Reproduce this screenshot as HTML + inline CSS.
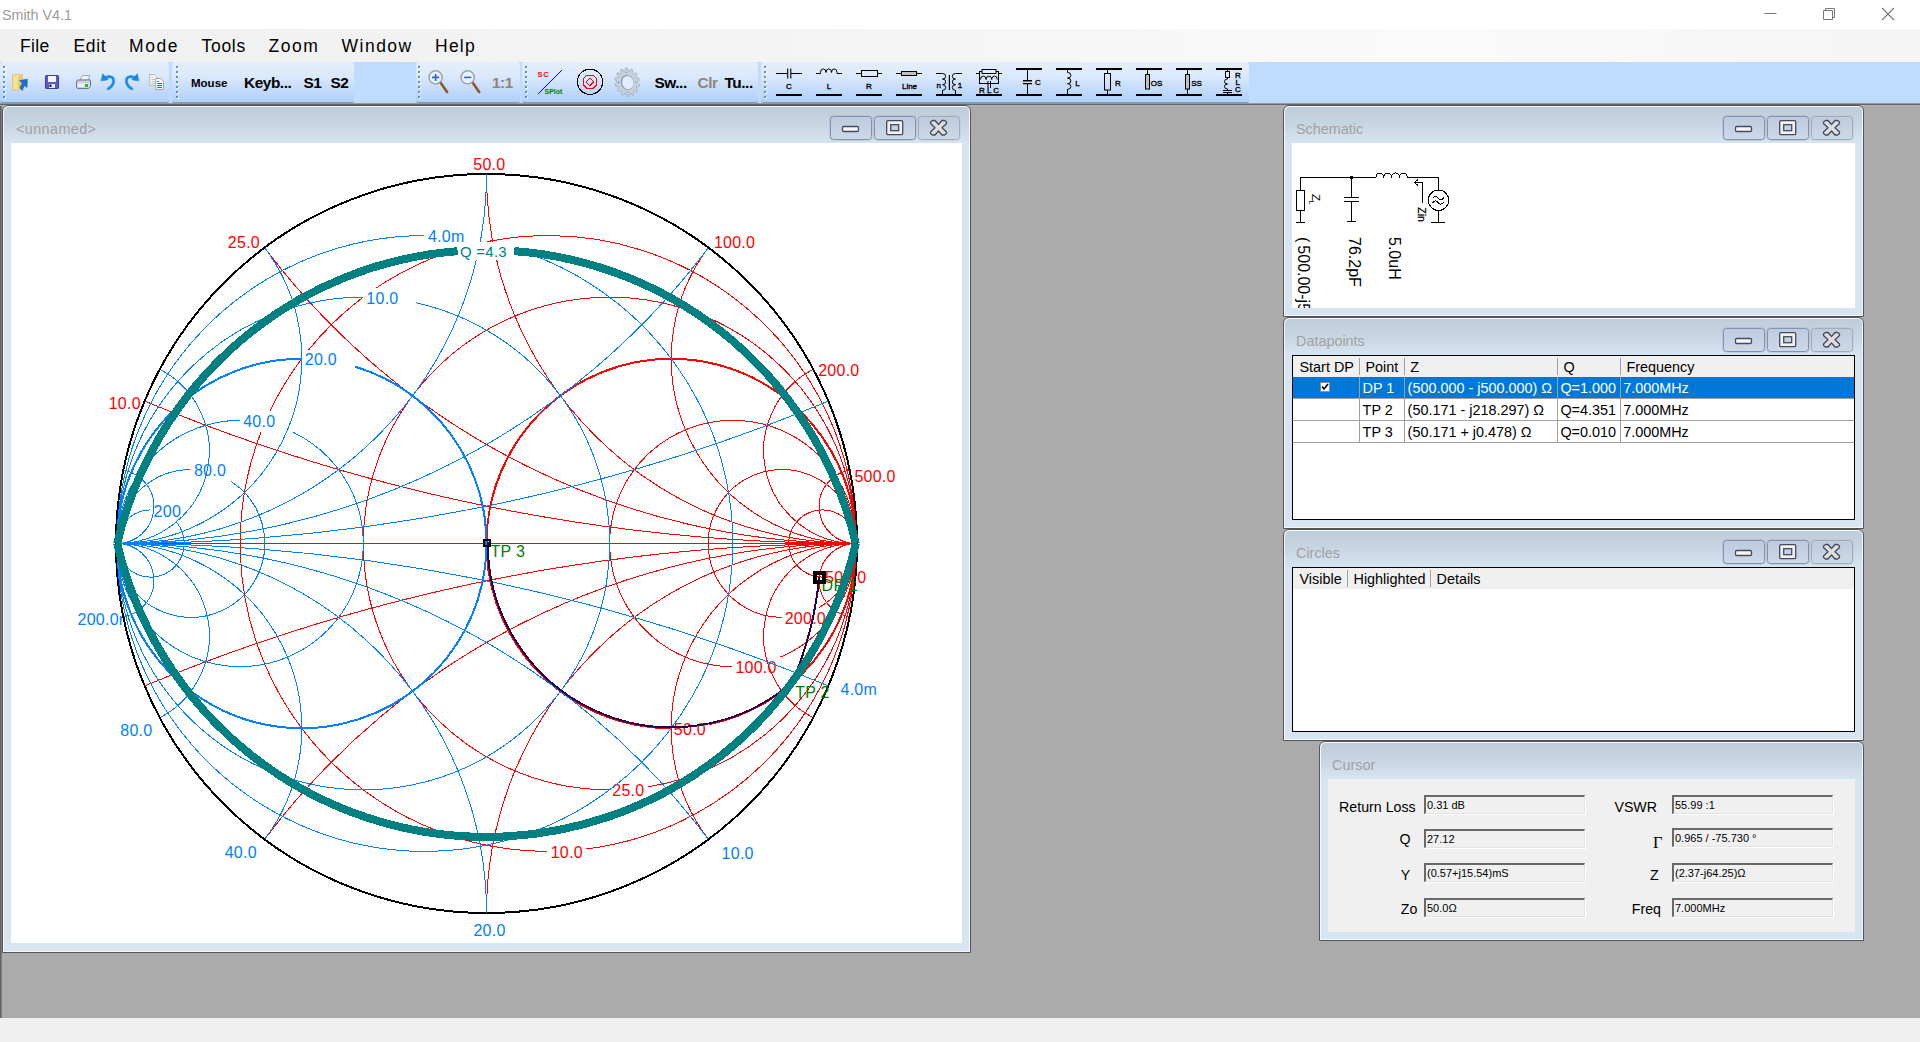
<!DOCTYPE html>
<html lang="en">
<head>
<meta charset="utf-8">
<title>Smith V4.1</title>
<style>
html,body{margin:0;padding:0;}
body{width:1920px;height:1042px;overflow:hidden;background:#ababab;font-family:"Liberation Sans",sans-serif;}
#app{position:relative;width:1920px;height:1042px;overflow:hidden;background:#ababab;}
#app div,#app span,#app svg{position:absolute;box-sizing:border-box;}
#titlebar{left:0;top:0;width:1920px;height:29px;background:#fff;}
#apptitle{left:2px;top:6px;font-size:14.3px;line-height:18px;color:#9b9b9b;white-space:nowrap;}
#winbtns{left:1740px;top:0;}
#menubar{left:0;top:29px;width:1920px;height:33px;background:linear-gradient(to right,#f0f0f0 0%,#f4f4f4 40%,#fafafa 75%,#f5f5f5 100%);}
#menubar span{top:6px;font-size:17.5px;line-height:22px;color:#000;white-space:nowrap;}
#toolbar{left:0;top:62px;width:1920px;height:41px;background:#bfdbff;}
#toolbar .band{top:0;height:41px;background:linear-gradient(to bottom,#e4effd 0%,#dbe9fc 35%,#c3dafa 70%,#b2d0fa 100%);border-bottom:1px solid #6f9bd8;border-radius:3px 3px 2px 2px;}
#tbsvg{left:0;top:0;}
#mdi{left:0;top:103px;width:1920px;height:915px;background:#ababab;}
#mdiline{left:0;top:0;width:1920px;height:3px;background:linear-gradient(to bottom,#9b9895 0,#9b9895 1px,#666 1px,#666 2px,#b3b3b3 2px,#b3b3b3 3px);}
#mdi:before{content:"";position:absolute;left:0;top:0;width:2px;height:915px;background:linear-gradient(to right,#555,#8a8a8a);}
#statusbar{left:0;top:1018px;width:1920px;height:24px;background:#f0f0f0;}
.win{background:#d7e4f2;border:1px solid #555;border-radius:6px 6px 0 0;box-shadow:inset 1px 1px 0 #f4f8fc,inset -1px -1px 0 #f4f8fc;}
.win .cap{left:1px;top:1px;right:1px;height:37px;border-radius:5px 5px 0 0;background:linear-gradient(to bottom,#bfcddb 0%,#c6d3e0 40%,#d7e4f2 100%);}
.win .ttl{top:15px;font-size:14.4px;line-height:17px;color:#a2a2a2;white-space:nowrap;}
.win .client{background:#fff;}
.wb{top:10px;width:42px;height:24px;border:1px solid #8391b4;border-radius:3.5px;background:linear-gradient(to bottom,rgba(186,200,222,.6),rgba(198,212,230,.6));box-shadow:0 0 0 .5px rgba(131,145,180,.45);}
.wb.x{border-color:#a3abb9;box-shadow:0 0 0 .5px rgba(163,171,185,.4);}
.lv{background:#fff;border:1px solid #000;}
.lv .hdr{left:0;top:0;right:0;height:21px;background:#f0f0f0;}
.lv .hdr span{top:3px;font-size:14.4px;line-height:17px;color:#000;white-space:nowrap;}
.lv .hdr i{position:absolute;top:2px;width:1px;height:17px;background:#a0a0a0;}
.lv .row{left:0;right:0;height:22px;border-bottom:1px solid #a0a0a0;}
.lv .row span{top:3px;font-size:14.4px;line-height:17px;color:#000;white-space:nowrap;}
.lv .row i{position:absolute;top:0;width:1px;height:22px;background:#a0a0a0;}
.lv .row.sel{background:#0078d7;}
.lv .row.sel span{color:#fff;}
.cur label{position:absolute;font-size:14.2px;line-height:17px;color:#000;white-space:nowrap;text-align:right;}
.cur .fld{height:19px;width:161px;background:#f0f0f0;border-top:2px solid #696969;border-left:2px solid #696969;border-right:1px solid #e3e3e3;border-bottom:1px solid #e3e3e3;box-shadow:1px 1px 0 #fff;font-size:11px;line-height:14px;padding:1px 0 0 1px;color:#000;white-space:nowrap;overflow:hidden;}

</style>
</head>
<body>
<div id="app">
<div id="titlebar"><span id="apptitle">Smith V4.1</span>
<svg id="winbtns" width="180" height="29" viewBox="0 0 180 29">
<path d="M24.5 13.5H36.500" stroke="#777" stroke-width="1" fill="none"/>
<path d="M83.5 10.500H92.500V19.500H83.500ZM85.500 10.500V8.500H94.500V17.500H92.500" stroke="#777" stroke-width="1" fill="none"/>
<path d="M142 8L154 20M154 8L142 20" stroke="#777" stroke-width="1.100" fill="none"/>
</svg>
</div>
<div id="menubar">
<span style="left:20px;letter-spacing:.35px">File</span><span style="left:73.500px;letter-spacing:.65px">Edit</span><span style="left:129px;letter-spacing:1.6px">Mode</span><span style="left:201.500px;letter-spacing:.7px">Tools</span><span style="left:268.500px;letter-spacing:1.5px">Zoom</span><span style="left:341.500px;letter-spacing:1.5px">Window</span><span style="left:435px;letter-spacing:1.25px">Help</span>
</div>
<div id="toolbar">
<div class="band" style="left:0px;width:169px"></div>
<div class="band" style="left:172px;width:182px"></div>
<div class="band" style="left:416px;width:104px"></div>
<div class="band" style="left:522px;width:236px"></div>
<div class="band" style="left:761px;width:488px"></div>
<svg id="tbsvg" width="1920" height="41" viewBox="0 0 1920 41" font-family="'Liberation Sans', sans-serif">
<rect x="4" y="5" width="2" height="2" fill="#fff"/>
<rect x="3" y="4" width="2" height="2" fill="#5b8bd6"/>
<rect x="4" y="10" width="2" height="2" fill="#fff"/>
<rect x="3" y="9" width="2" height="2" fill="#5b8bd6"/>
<rect x="4" y="15" width="2" height="2" fill="#fff"/>
<rect x="3" y="14" width="2" height="2" fill="#5b8bd6"/>
<rect x="4" y="20" width="2" height="2" fill="#fff"/>
<rect x="3" y="19" width="2" height="2" fill="#5b8bd6"/>
<rect x="4" y="25" width="2" height="2" fill="#fff"/>
<rect x="3" y="24" width="2" height="2" fill="#5b8bd6"/>
<rect x="4" y="30" width="2" height="2" fill="#fff"/>
<rect x="3" y="29" width="2" height="2" fill="#5b8bd6"/>
<rect x="4" y="35" width="2" height="2" fill="#fff"/>
<rect x="3" y="34" width="2" height="2" fill="#5b8bd6"/>
<rect x="177" y="5" width="2" height="2" fill="#fff"/>
<rect x="176" y="4" width="2" height="2" fill="#5b8bd6"/>
<rect x="177" y="10" width="2" height="2" fill="#fff"/>
<rect x="176" y="9" width="2" height="2" fill="#5b8bd6"/>
<rect x="177" y="15" width="2" height="2" fill="#fff"/>
<rect x="176" y="14" width="2" height="2" fill="#5b8bd6"/>
<rect x="177" y="20" width="2" height="2" fill="#fff"/>
<rect x="176" y="19" width="2" height="2" fill="#5b8bd6"/>
<rect x="177" y="25" width="2" height="2" fill="#fff"/>
<rect x="176" y="24" width="2" height="2" fill="#5b8bd6"/>
<rect x="177" y="30" width="2" height="2" fill="#fff"/>
<rect x="176" y="29" width="2" height="2" fill="#5b8bd6"/>
<rect x="177" y="35" width="2" height="2" fill="#fff"/>
<rect x="176" y="34" width="2" height="2" fill="#5b8bd6"/>
<rect x="419" y="5" width="2" height="2" fill="#fff"/>
<rect x="418" y="4" width="2" height="2" fill="#5b8bd6"/>
<rect x="419" y="10" width="2" height="2" fill="#fff"/>
<rect x="418" y="9" width="2" height="2" fill="#5b8bd6"/>
<rect x="419" y="15" width="2" height="2" fill="#fff"/>
<rect x="418" y="14" width="2" height="2" fill="#5b8bd6"/>
<rect x="419" y="20" width="2" height="2" fill="#fff"/>
<rect x="418" y="19" width="2" height="2" fill="#5b8bd6"/>
<rect x="419" y="25" width="2" height="2" fill="#fff"/>
<rect x="418" y="24" width="2" height="2" fill="#5b8bd6"/>
<rect x="419" y="30" width="2" height="2" fill="#fff"/>
<rect x="418" y="29" width="2" height="2" fill="#5b8bd6"/>
<rect x="419" y="35" width="2" height="2" fill="#fff"/>
<rect x="418" y="34" width="2" height="2" fill="#5b8bd6"/>
<rect x="526" y="5" width="2" height="2" fill="#fff"/>
<rect x="525" y="4" width="2" height="2" fill="#5b8bd6"/>
<rect x="526" y="10" width="2" height="2" fill="#fff"/>
<rect x="525" y="9" width="2" height="2" fill="#5b8bd6"/>
<rect x="526" y="15" width="2" height="2" fill="#fff"/>
<rect x="525" y="14" width="2" height="2" fill="#5b8bd6"/>
<rect x="526" y="20" width="2" height="2" fill="#fff"/>
<rect x="525" y="19" width="2" height="2" fill="#5b8bd6"/>
<rect x="526" y="25" width="2" height="2" fill="#fff"/>
<rect x="525" y="24" width="2" height="2" fill="#5b8bd6"/>
<rect x="526" y="30" width="2" height="2" fill="#fff"/>
<rect x="525" y="29" width="2" height="2" fill="#5b8bd6"/>
<rect x="526" y="35" width="2" height="2" fill="#fff"/>
<rect x="525" y="34" width="2" height="2" fill="#5b8bd6"/>
<rect x="765" y="5" width="2" height="2" fill="#fff"/>
<rect x="764" y="4" width="2" height="2" fill="#5b8bd6"/>
<rect x="765" y="10" width="2" height="2" fill="#fff"/>
<rect x="764" y="9" width="2" height="2" fill="#5b8bd6"/>
<rect x="765" y="15" width="2" height="2" fill="#fff"/>
<rect x="764" y="14" width="2" height="2" fill="#5b8bd6"/>
<rect x="765" y="20" width="2" height="2" fill="#fff"/>
<rect x="764" y="19" width="2" height="2" fill="#5b8bd6"/>
<rect x="765" y="25" width="2" height="2" fill="#fff"/>
<rect x="764" y="24" width="2" height="2" fill="#5b8bd6"/>
<rect x="765" y="30" width="2" height="2" fill="#fff"/>
<rect x="764" y="29" width="2" height="2" fill="#5b8bd6"/>
<rect x="765" y="35" width="2" height="2" fill="#fff"/>
<rect x="764" y="34" width="2" height="2" fill="#5b8bd6"/>
<path d="M12.500 13L16 12.500H22.500V26L17.500 28.500L12.500 27.500Z" fill="#f6e39a" stroke="#e0b95a" stroke-width="0.800"/>
<path d="M17.800 14L22.500 12.800V26L17.800 28.300Z" fill="#eccb6c"/>
<path d="M19.500 18.500L27.300 17.300L27 25.500L24.800 23.500Q23.200 25.500 22.300 28.500L19.800 26Q21 23 22.300 21.300Z" fill="#1d6fd6" stroke="#1559b0" stroke-width="0.600"/>
<rect x="45.500" y="13.500" width="13" height="13" rx="0.800" fill="#5a57cf" stroke="#3f3c9f" stroke-width="1"/>
<rect x="48" y="14" width="8" height="6" fill="#f4f4fb"/>
<rect x="49" y="22" width="6" height="4" fill="#e8e8f2"/><rect x="49.500" y="22.500" width="2" height="2.500" fill="#111"/>
<path d="M80 18L82.500 13.500H90L88 18Z" fill="#f2f4f8" stroke="#8e99a8" stroke-width="0.800"/>
<path d="M76.500 20Q76.500 18 78.500 18H88.500Q90.500 17 90.500 19V24.500L88.500 26.500H78Q76.500 26.500 76.500 25Z" fill="#c9d2de" stroke="#5f7088" stroke-width="0.900"/>
<rect x="77.500" y="21.500" width="11" height="3.500" fill="#eef1f6"/>
<rect x="85" y="22" width="3" height="3" fill="#19c419"/>
<g><path d="M105.500 15.300Q114.200 13 113.600 19.800Q113 24.300 107.300 27.400" fill="none" stroke="#1f8fe0" stroke-width="2.700" stroke-linecap="butt"/><path d="M102.600 11.800L108.300 17.600L105.800 18.200L101.200 18.800Z" fill="#1f86d8" stroke="#1f86d8" stroke-width="0.600" stroke-linejoin="round"/></g>
<g transform="translate(240 0) scale(-1 1)"><path d="M105.500 15.300Q114.200 13 113.600 19.800Q113 24.300 107.300 27.400" fill="none" stroke="#1f8fe0" stroke-width="2.700" stroke-linecap="butt"/><path d="M102.600 11.800L108.300 17.600L105.800 18.200L101.200 18.800Z" fill="#1f86d8" stroke="#1f86d8" stroke-width="0.600" stroke-linejoin="round"/></g>
<path d="M149.700 12.500H154.500L157.300 15.300V23.300H149.700Z" fill="#f6f6f4" stroke="#b9b9b5" stroke-width="1"/>
<path d="M151.500 15.500H153M151.500 17.500H155.500M151.500 19.500H155.500M151.500 21.500H155.500" stroke="#a9c4e4" stroke-width="0.900"/>
<path d="M155.700 16.500H160.600L163.500 19.400V27.500H155.700Z" fill="#fbfbfa" stroke="#a5a5a0" stroke-width="1"/>
<path d="M157.300 19.500H159M157.300 21.500H162M157.300 23.500H162M157.300 25.500H162" stroke="#2b66b8" stroke-width="1"/>
<path d="M440.1 20.0L447.1 30" stroke="#8a5a2b" stroke-width="2.600" stroke-linecap="round"/>
<circle cx="435.6" cy="15.400" r="6.600" fill="#e9f1fb" stroke="#9aa3ad" stroke-width="1.500"/>
<path d="M432.0 15.400H439.2M435.6 11.900V18.900" stroke="#2a68c8" stroke-width="1.600"/>
<path d="M472.2 20.0L479.2 30" stroke="#8a5a2b" stroke-width="2.600" stroke-linecap="round"/>
<circle cx="467.7" cy="15.400" r="6.600" fill="#e9f1fb" stroke="#9aa3ad" stroke-width="1.500"/>
<path d="M464.1 15.400H471.3" stroke="#2a68c8" stroke-width="1.600"/>
<text x="492" y="26.200" font-size="15.400" letter-spacing="-0.450" font-weight="bold" fill="#8d857a">1:1</text>
<path d="M538 32L562 8" stroke="#0000ff" stroke-width="1" shape-rendering="crispEdges"/>
<text x="537.500" y="15.300" font-size="7.500" font-weight="bold" fill="#ff0000" letter-spacing="0.800">SC</text>
<text x="544.500" y="31.800" font-size="7" font-weight="bold" fill="#008000">SPlot</text>
<circle cx="590" cy="19.800" r="12.600" fill="none" stroke="#000" stroke-width="1.100" shape-rendering="crispEdges"/>
<path d="M596.8 22.6L592.8 26.6L587.2 26.6L583.2 22.6L583.2 17.0L587.2 13.0L592.8 13.0L596.8 17.0Z" fill="none" stroke="#ff0000" stroke-width="1" shape-rendering="crispEdges"/>
<path d="M590 15.900L593.900 19.800L590 23.700L586.100 19.800Z" fill="none" stroke="#ff0000" stroke-width="1" shape-rendering="crispEdges"/>
<g transform="translate(627.200 20.200) rotate(-14) scale(0.860 1)"><path d="M11.5 -1.7L14.1 -1.2L14.1 1.2L11.5 1.7L11.1 3.4L13.3 5.1L12.2 7.2L9.6 6.5L8.5 7.9L9.8 10.3L7.9 11.8L5.8 10.0L4.2 10.8L4.3 13.5L2.0 14.1L0.9 11.6L-0.9 11.6L-2.0 14.1L-4.3 13.5L-4.2 10.8L-5.8 10.0L-7.9 11.8L-9.8 10.3L-8.5 7.9L-9.6 6.5L-12.2 7.2L-13.3 5.1L-11.1 3.4L-11.5 1.7L-14.1 1.2L-14.1 -1.2L-11.5 -1.7L-11.1 -3.4L-13.3 -5.1L-12.2 -7.2L-9.6 -6.5L-8.5 -7.9L-9.8 -10.3L-7.9 -11.8L-5.8 -10.0L-4.2 -10.8L-4.3 -13.5L-2.0 -14.1L-0.9 -11.6L0.9 -11.6L2.0 -14.1L4.3 -13.5L4.2 -10.8L5.8 -10.0L7.9 -11.8L9.8 -10.3L8.5 -7.9L9.6 -6.5L12.2 -7.2L13.3 -5.1L11.1 -3.4Z" fill="#c6d1dc" stroke="#9aaabb" stroke-width="0.700" stroke-linejoin="round"/><circle cx="0" cy="0.300" r="7.600" fill="#8fa2bb"/><circle cx="0.600" cy="0.600" r="6.600" fill="#e3ecfa"/><circle cx="-9.600" cy="-2" r="0.700" fill="#6f86a0"/><circle cx="9.600" cy="2" r="0.700" fill="#6f86a0"/><circle cx="2" cy="-9.600" r="0.700" fill="#6f86a0"/><circle cx="-2" cy="9.600" r="0.700" fill="#6f86a0"/></g>
<text x="654.500" y="26.200" font-size="15.400" letter-spacing="-0.450" font-weight="bold" fill="#000">Sw...</text>
<text x="697.500" y="26.200" font-size="15.400" letter-spacing="-0.450" font-weight="bold" fill="#8d857a">Clr</text>
<text x="724.500" y="26.200" font-size="15.400" letter-spacing="-0.450" font-weight="bold" fill="#000">Tu...</text>
<text x="191" y="24.700" font-size="11.500" font-weight="bold" fill="#000">Mouse</text>
<text x="244" y="25.700" font-size="15.400" letter-spacing="-0.450" font-weight="bold" fill="#000">Keyb...</text>
<text x="303.500" y="25.700" font-size="15.400" letter-spacing="-0.450" font-weight="bold" fill="#000">S1</text>
<text x="330.500" y="25.700" font-size="15.400" letter-spacing="-0.450" font-weight="bold" fill="#000">S2</text>
<rect x="776" y="32" width="26" height="2" fill="#000"/>
<rect x="816" y="32" width="26" height="2" fill="#000"/>
<rect x="856" y="32" width="26" height="2" fill="#000"/>
<rect x="896" y="32" width="26" height="2" fill="#000"/>
<rect x="936" y="32" width="26" height="2" fill="#000"/>
<rect x="976" y="32" width="26" height="2" fill="#000"/>
<rect x="1016" y="32" width="26" height="2" fill="#000"/>
<rect x="1016" y="6" width="26" height="2" fill="#000"/>
<rect x="1056" y="32" width="26" height="2" fill="#000"/>
<rect x="1056" y="6" width="26" height="2" fill="#000"/>
<rect x="1096" y="32" width="26" height="2" fill="#000"/>
<rect x="1096" y="6" width="26" height="2" fill="#000"/>
<rect x="1136" y="32" width="26" height="2" fill="#000"/>
<rect x="1136" y="6" width="26" height="2" fill="#000"/>
<rect x="1176" y="32" width="26" height="2" fill="#000"/>
<rect x="1176" y="6" width="26" height="2" fill="#000"/>
<rect x="1216" y="32" width="26" height="2" fill="#000"/>
<rect x="1216" y="6" width="26" height="2" fill="#000"/>
<path d="M776 11.5H787.5M791.0 11.5H802" stroke="#000" fill="none" stroke-width="1"/>
<path d="M787.7 6.500V16.500M790.8 6.500V16.500" stroke="#000" fill="none" stroke-width="1.100"/>
<text x="789.0" y="26.600" font-size="8" fill="#000" stroke="#000" stroke-width="0.350" text-anchor="middle">C</text>
<path d="M816 11.5H820.5V10.500a2.75 3.60 0 0 1 5.50 0a2.75 3.60 0 0 1 5.50 0a2.75 3.60 0 0 1 5.50 0 V11.500H842" stroke="#000" fill="none" stroke-width="1"/>
<text x="829.0" y="26.600" font-size="8" fill="#000" stroke="#000" stroke-width="0.350" text-anchor="middle">L</text>
<path d="M856 11.5H861.0M877.0 11.5H882" stroke="#000" fill="none" stroke-width="1"/>
<rect x="861.5" y="8.500" width="16" height="6" stroke="#000" fill="none" stroke-width="1"/>
<text x="869.0" y="26.600" font-size="8" fill="#000" stroke="#000" stroke-width="0.350" text-anchor="middle">R</text>
<path d="M896 11.5H901.0M917.0 11.5H922" stroke="#000" fill="none" stroke-width="1"/>
<rect x="901.5" y="9.500" width="15" height="4" stroke="#000" fill="#c0c0c0" stroke-width="1"/>
<text x="909.5" y="26.600" font-size="8" fill="#000" stroke="#000" stroke-width="0.350" text-anchor="middle">Line</text>
<path d="M936 11.5H942.5a3.20 2.80 0 0 1 0 5.60a3.20 2.80 0 0 1 0 5.60a3.20 2.80 0 0 1 0 5.60 V32" stroke="#000" fill="none" stroke-width="1"/>
<path d="M962 11.5H955.5a3.20 2.80 0 0 0 0 5.60a3.20 2.80 0 0 0 0 5.60a3.20 2.80 0 0 0 0 5.60 V32" stroke="#000" fill="none" stroke-width="1"/>
<path d="M949.4 13V28" stroke="#000" fill="none" stroke-width="1.200"/>
<text x="938.8" y="26" font-size="8" fill="#000" stroke="#000" stroke-width="0.350" text-anchor="middle">n</text>
<text x="960.0" y="26" font-size="8" fill="#000" stroke="#000" stroke-width="0.350" text-anchor="middle">1</text>
<path d="M976 11.5H979.5M998.5 11.5H1002" stroke="#000" fill="none" stroke-width="1"/>
<rect x="979.5" y="9.500" width="19" height="12" stroke="#000" fill="none" stroke-width="1"/>
<rect x="982.0" y="7.500" width="14" height="4" stroke="#000" fill="#e4effd" stroke-width="1"/>
<path d="M980.50 17.50a2.80 3.40 0 0 1 5.60 0a2.80 3.40 0 0 1 5.60 0a2.80 3.40 0 0 1 5.60 0" stroke="#000" fill="none" stroke-width="1"/>
<path d="M988.0 19V26M990.5 19V26" stroke="#000" fill="none" stroke-width="1"/>
<text x="989.0" y="31" font-size="8" fill="#000" stroke="#000" stroke-width="0.350" text-anchor="middle">R L C</text>
<path d="M1027.5 8V18.500M1027.5 22V32" stroke="#000" fill="none" stroke-width="1"/>
<path d="M1023 18.700H1032M1023 21.600H1032" stroke="#000" fill="none" stroke-width="1.400"/>
<text x="1038.0" y="23.200" font-size="8" fill="#000" stroke="#000" stroke-width="0.350" text-anchor="middle">C</text>
<path d="M1067.5 8V10.500a3.40 2.80 0 0 1 0 5.60a3.40 2.80 0 0 1 0 5.60a3.40 2.80 0 0 1 0 5.60 V32" stroke="#000" fill="none" stroke-width="1"/>
<text x="1077.5" y="24" font-size="8" fill="#000" stroke="#000" stroke-width="0.350" text-anchor="middle">L</text>
<path d="M1107.5 8V11.500M1107.5 28V32" stroke="#000" fill="none" stroke-width="1"/>
<rect x="1104.5" y="11.500" width="6" height="16.500" stroke="#000" fill="none" stroke-width="1"/>
<text x="1117.8" y="24" font-size="8" fill="#000" stroke="#000" stroke-width="0.350" text-anchor="middle">R</text>
<path d="M1147.5 8V12.500" stroke="#000" fill="none" stroke-width="1"/>
<rect x="1145.5" y="12.500" width="4" height="14.500" stroke="#000" fill="#c0c0c0" stroke-width="1"/>
<text x="1156.5" y="24" font-size="8" fill="#000" stroke="#000" stroke-width="0.350" text-anchor="middle">OS</text>
<path d="M1187.5 8V12.500M1187.5 27V32" stroke="#000" fill="none" stroke-width="1"/>
<rect x="1185.5" y="12.500" width="4" height="14.500" stroke="#000" fill="#c0c0c0" stroke-width="1"/>
<text x="1196.5" y="24" font-size="8" fill="#000" stroke="#000" stroke-width="0.350" text-anchor="middle">SS</text>
<path d="M1227.5 8V9.500M1227.5 15.500V17a3.00 2.50 0 0 0 0 5.00a3.00 2.50 0 0 0 0 5.00 V28M1227.5 31V32" stroke="#000" fill="none" stroke-width="1"/>
<rect x="1225.5" y="9.500" width="4" height="6" stroke="#000" fill="none" stroke-width="1"/>
<path d="M1223 28.500H1232M1223 30.500H1232" stroke="#000" fill="none" stroke-width="1"/>
<text x="1238.0" y="16" font-size="8" fill="#000" stroke="#000" stroke-width="0.350" text-anchor="middle">R</text>
<text x="1237.7" y="22.800" font-size="8" fill="#000" stroke="#000" stroke-width="0.350" text-anchor="middle">L</text>
<text x="1238.0" y="29.900" font-size="8" fill="#000" stroke="#000" stroke-width="0.350" text-anchor="middle">C</text>
</svg>
</div>
<div id="mdi">
<div id="mdiline"></div>
<div class="win" style="left:2px;top:2px;width:969px;height:848px"><div class="cap"></div><span class="ttl" style="left:13px"><span style="position:static;letter-spacing:.4px">&lt;unnamed&gt;</span></span><div class="wb" style="left:827px"><svg width="40" height="22" viewBox="0 0 40 22" style="left:0;top:0"><rect x="11.500" y="9.500" width="16" height="5" rx="1.200" fill="#f6f6f6" stroke="#454a5c" stroke-width="1.300"/></svg></div><div class="wb" style="left:871px"><svg width="40" height="22" viewBox="0 0 40 22" style="left:0;top:0"><rect x="11.700" y="3.700" width="16" height="14" rx="1.200" fill="#f2f2f2" stroke="#454a5c" stroke-width="1.300"/><rect x="15.700" y="7.700" width="8" height="6" fill="#c3d0e2" stroke="#454a5c" stroke-width="1.300"/></svg></div><div class="wb x" style="left:915px"><svg width="40" height="22" viewBox="0 0 40 22" style="left:0;top:0"><path d="M11.500 5L13.500 3.500H16L19.500 7.500L23 3.500H25.500L27.500 5V6.500L23 10.700L27.500 15V16.500L25.500 18H23L19.500 14L16 18H13.500L11.500 16.500V15L16 10.700L11.500 6.500Z" fill="#dedede" stroke="#454a5c" stroke-width="1.300" stroke-linejoin="round"/></svg></div><div class="client" style="left:8px;top:37px;width:951px;height:800px;overflow:hidden"><svg id="chart" style="left:0;top:0" width="951" height="800" viewBox="11 143 951 800" font-family="'Liberation Sans', sans-serif" letter-spacing="0.25" shape-rendering="crispEdges">
<text x="840.5" y="694.8" fill="#0080ff" font-size="16" text-anchor="start">4.0m</text>
<text x="721.6" y="858.5" fill="#0080ff" font-size="16" text-anchor="start">10.0</text>
<text x="473.4" y="936" fill="#0080ff" font-size="16" text-anchor="start">20.0</text>
<text x="256.8" y="857.8" fill="#0080ff" font-size="16" text-anchor="end">40.0</text>
<text x="152.4" y="736.2" fill="#0080ff" font-size="16" text-anchor="end">80.0</text>
<text x="77.5" y="625" fill="#0080ff" font-size="16" text-anchor="start">200.0m</text>
<ellipse cx="486.5" cy="543.5" rx="370.5" ry="369.5" fill="#fff" stroke="#000" stroke-width="2"/>
<path d="M117 543.5H856" stroke="#ff0000" stroke-width="1" fill="none"/>
<path d="M547.44 851.42A307.92 307.92 0 0 1 240.3 552.57A307.92 307.92 0 0 1 529.31 236.16A307.92 307.92 0 0 1 854.68 515.04A307.92 307.92 0 0 1 586.2 849.05" stroke="#ff0000" stroke-width="1" fill="none"/>
<text x="550.68" y="857.92" fill="#ff0000" font-size="16" text-anchor="start">10.0</text>
<path d="M609.15 789.83A246.33 246.33 0 0 1 363.5 552.66A246.33 246.33 0 0 1 590.84 297.89A246.33 246.33 0 0 1 854.35 515.04A246.33 246.33 0 0 1 647.72 786.88" stroke="#ff0000" stroke-width="1" fill="none"/>
<text x="612.27" y="795.83" fill="#ff0000" font-size="16" text-anchor="start">25.0</text>
<path d="M670.68 728.25A184.75 184.75 0 0 1 486.73 552.66A184.75 184.75 0 0 1 652.39 359.72A184.75 184.75 0 0 1 853.79 514.99A184.75 184.75 0 0 1 709.33 724.28" stroke="#ff0000" stroke-width="2" fill="none"/>
<text x="673.85" y="734.85" fill="#ff0000" font-size="16" text-anchor="start">50.0</text>
<path d="M732.33 666.67A123.17 123.17 0 0 1 610.23 555.3A123.17 123.17 0 0 1 708.85 422.69A123.17 123.17 0 0 1 850.64 507.56A123.17 123.17 0 0 1 780.36 657.13" stroke="#ff0000" stroke-width="1" fill="none"/>
<text x="735.43" y="672.67" fill="#ff0000" font-size="16" text-anchor="start">100.0</text>
<path d="M781.58 617.4A73.9 73.9 0 0 1 708.78 552.71A73.9 73.9 0 0 1 763.31 472.03A73.9 73.9 0 0 1 850.48 515.47A73.9 73.9 0 0 1 818.89 607.59" stroke="#ff0000" stroke-width="1" fill="none"/>
<text x="784.7" y="623.9" fill="#ff0000" font-size="16" text-anchor="start">200.0</text>
<path d="M821.9 577.09A33.59 33.59 0 0 1 789.39 549.67A33.59 33.59 0 0 1 809.81 512.36A33.59 33.59 0 0 1 850.43 524.97A33.59 33.59 0 0 1 846.13 567.28" stroke="#ff0000" stroke-width="1" fill="none"/>
<text x="825.01" y="583.09" fill="#ff0000" font-size="16" text-anchor="start">500.0</text>
<path d="M145.42 401.38A1847.5 1847.5 0 0 0 856 543.5" stroke="#ff0000" stroke-width="1" fill="none"/>
<path d="M145.42 685.62A1847.5 1847.5 0 0 1 856 543.5" stroke="#ff0000" stroke-width="1" fill="none"/>
<path d="M264.8 247.9A739 739 0 0 0 856 543.5" stroke="#ff0000" stroke-width="1" fill="none"/>
<path d="M264.8 839.1A739 739 0 0 1 856 543.5" stroke="#ff0000" stroke-width="1" fill="none"/>
<path d="M486.5 174A369.5 369.5 0 0 0 856 543.5" stroke="#ff0000" stroke-width="1" fill="none"/>
<path d="M486.5 913A369.5 369.5 0 0 1 856 543.5" stroke="#ff0000" stroke-width="1" fill="none"/>
<path d="M708.2 247.9A184.75 184.75 0 0 0 690.75 441.37A184.75 184.75 0 0 0 856 543.5" stroke="#ff0000" stroke-width="1" fill="none"/>
<path d="M708.2 839.1A184.75 184.75 0 0 1 690.75 645.63A184.75 184.75 0 0 1 856 543.5" stroke="#ff0000" stroke-width="1" fill="none"/>
<path d="M812.53 369.62A92.38 92.38 0 0 0 766.38 473.53A92.38 92.38 0 0 0 856 543.5" stroke="#ff0000" stroke-width="1" fill="none"/>
<path d="M812.53 717.38A92.38 92.38 0 0 1 766.38 613.47A92.38 92.38 0 0 1 856 543.5" stroke="#ff0000" stroke-width="1" fill="none"/>
<path d="M848.68 470.33A36.95 36.95 0 0 0 819.23 510.23A36.95 36.95 0 0 0 856 543.5" stroke="#ff0000" stroke-width="1" fill="none"/>
<path d="M848.68 616.67A36.95 36.95 0 0 1 819.23 576.77A36.95 36.95 0 0 1 856 543.5" stroke="#ff0000" stroke-width="1" fill="none"/>
<text x="140.8" y="408.6" fill="#ff0000" font-size="16" text-anchor="end">10.0</text>
<text x="260" y="248" fill="#ff0000" font-size="16" text-anchor="end">25.0</text>
<text x="473.3" y="170" fill="#ff0000" font-size="16" text-anchor="start">50.0</text>
<text x="713.9" y="247.6" fill="#ff0000" font-size="16" text-anchor="start">100.0</text>
<text x="818.2" y="376.2" fill="#ff0000" font-size="16" text-anchor="start">200.0</text>
<text x="854.4" y="482" fill="#ff0000" font-size="16" text-anchor="start">500.0</text>
<rect x="424.42" y="226.58" width="63" height="21" fill="#fff"/>
<path d="M487.48 242.01A307.92 307.92 0 0 1 729.24 590.41A307.92 307.92 0 0 1 393.79 849.84A307.92 307.92 0 0 1 117.38 528.24A307.92 307.92 0 0 1 424.27 235.58" stroke="#0080ff" stroke-width="1" fill="none"/>
<text x="427.92" y="242.18" fill="#0080ff" font-size="16" text-anchor="start">4.0m</text>
<rect x="362.83" y="288.17" width="53.5" height="21" fill="#fff"/>
<path d="M416.4 302.95A246.33 246.33 0 0 1 606.43 583.31A246.33 246.33 0 0 1 336.9 788.41A246.33 246.33 0 0 1 117.34 530.52A246.33 246.33 0 0 1 362.82 297.17" stroke="#0080ff" stroke-width="1" fill="none"/>
<text x="366.33" y="303.77" fill="#0080ff" font-size="16" text-anchor="start">10.0</text>
<rect x="301.25" y="349.75" width="53.5" height="21" fill="#fff"/>
<path d="M354.78 366.52A184.75 184.75 0 0 1 482.14 583.38A184.75 184.75 0 0 1 275.24 726.34A184.75 184.75 0 0 1 117.46 530.49A184.75 184.75 0 0 1 301.18 358.75" stroke="#0080ff" stroke-width="2" fill="none"/>
<text x="304.75" y="365.35" fill="#0080ff" font-size="16" text-anchor="start">20.0</text>
<rect x="239.67" y="411.33" width="53.5" height="21" fill="#fff"/>
<path d="M293.2 432.34A123.17 123.17 0 0 1 356.57 583.74A123.17 123.17 0 0 1 213.23 663.68A123.17 123.17 0 0 1 117.72 530.2A123.17 123.17 0 0 1 239.66 420.33" stroke="#0080ff" stroke-width="1" fill="none"/>
<text x="243.17" y="426.93" fill="#0080ff" font-size="16" text-anchor="start">40.0</text>
<rect x="190.4" y="460.6" width="53.5" height="21" fill="#fff"/>
<path d="M231.28 481.61A73.9 73.9 0 0 1 258.02 574.43A73.9 73.9 0 0 1 170.09 614.41A73.9 73.9 0 0 1 117.71 533.25A73.9 73.9 0 0 1 190.38 469.6" stroke="#0080ff" stroke-width="1" fill="none"/>
<text x="193.9" y="476.2" fill="#0080ff" font-size="16" text-anchor="start">80.0</text>
<rect x="150.09" y="500.91" width="53.5" height="21" fill="#fff"/>
<path d="M176.33 521.92A33.59 33.59 0 0 1 177.31 563.86A33.59 33.59 0 0 1 136.62 574.05A33.59 33.59 0 0 1 117.72 536.6A33.59 33.59 0 0 1 150.08 509.91" stroke="#0080ff" stroke-width="1" fill="none"/>
<text x="153.59" y="516.51" fill="#0080ff" font-size="16" text-anchor="start">200</text>
<path d="M827.58 685.62A1847.5 1847.5 0 0 0 117 543.5" stroke="#0080ff" stroke-width="1" fill="none"/>
<path d="M827.58 401.38A1847.5 1847.5 0 0 1 117 543.5" stroke="#0080ff" stroke-width="1" fill="none"/>
<path d="M708.2 839.1A739 739 0 0 0 117 543.5" stroke="#0080ff" stroke-width="1" fill="none"/>
<path d="M708.2 247.9A739 739 0 0 1 117 543.5" stroke="#0080ff" stroke-width="1" fill="none"/>
<path d="M486.5 913A369.5 369.5 0 0 0 117 543.5" stroke="#0080ff" stroke-width="1" fill="none"/>
<path d="M486.5 174A369.5 369.5 0 0 1 117 543.5" stroke="#0080ff" stroke-width="1" fill="none"/>
<path d="M264.8 839.1A184.75 184.75 0 0 0 282.25 645.63A184.75 184.75 0 0 0 117 543.5" stroke="#0080ff" stroke-width="1" fill="none"/>
<path d="M264.8 247.9A184.75 184.75 0 0 1 282.25 441.37A184.75 184.75 0 0 1 117 543.5" stroke="#0080ff" stroke-width="1" fill="none"/>
<path d="M160.47 717.38A92.38 92.38 0 0 0 206.62 613.47A92.38 92.38 0 0 0 117 543.5" stroke="#0080ff" stroke-width="1" fill="none"/>
<path d="M160.47 369.62A92.38 92.38 0 0 1 206.62 473.53A92.38 92.38 0 0 1 117 543.5" stroke="#0080ff" stroke-width="1" fill="none"/>
<path d="M124.32 616.67A36.95 36.95 0 0 0 153.77 576.77A36.95 36.95 0 0 0 117 543.5" stroke="#0080ff" stroke-width="1" fill="none"/>
<path d="M124.32 470.33A36.95 36.95 0 0 1 153.77 510.23A36.95 36.95 0 0 1 117 543.5" stroke="#0080ff" stroke-width="1" fill="none"/>
<path d="M819.22 576.94A351.9 351.9 0 0 1 791.84 683.32M791.45 682.87A183.83 183.83 0 0 1 594.1 710.22A183.83 183.83 0 0 1 487.74 541.75" stroke="#2b0048" stroke-width="2" fill="none"/>
<text x="821.62" y="590.94" fill="#008000" font-size="16" text-anchor="start">DP 1</text>
<text x="795.24" y="698.02" fill="#008000" font-size="16" text-anchor="start">TP 2</text>
<text x="490.54" y="556.74" fill="#008000" font-size="16" text-anchor="start">TP 3</text>
<rect x="815" y="573" width="9" height="9" fill="none" stroke="#000" stroke-width="4"/>
<rect x="484" y="540" width="6" height="6" fill="none" stroke="#000" stroke-width="2"/>
<rect x="456.8" y="241.5" width="57.9" height="18" fill="#fff"/>
<path d="M117.18 543.54A379.13 379.13 0 0 1 457.62 251.19M514.25 251.11A379.13 379.13 0 0 1 855.82 543.54" stroke="#008080" stroke-width="8" fill="none" stroke-linecap="butt"/>
<path d="M117.18 543.46A379.13 379.13 0 0 0 486.5 836.91A379.13 379.13 0 0 0 855.82 543.46" stroke="#008080" stroke-width="8" fill="none" stroke-linecap="butt"/>
<text x="460" y="256.6" fill="#008080" font-size="15" text-anchor="start">Q =4.3</text>
</svg></div></div>
<div class="win" style="left:1283px;top:2px;width:581px;height:212px"><div class="cap"></div><span class="ttl" style="left:12px">Schematic</span><div class="wb" style="left:439px"><svg width="40" height="22" viewBox="0 0 40 22" style="left:0;top:0"><rect x="11.500" y="9.500" width="16" height="5" rx="1.200" fill="#f6f6f6" stroke="#454a5c" stroke-width="1.300"/></svg></div><div class="wb" style="left:483px"><svg width="40" height="22" viewBox="0 0 40 22" style="left:0;top:0"><rect x="11.700" y="3.700" width="16" height="14" rx="1.200" fill="#f2f2f2" stroke="#454a5c" stroke-width="1.300"/><rect x="15.700" y="7.700" width="8" height="6" fill="#c3d0e2" stroke="#454a5c" stroke-width="1.300"/></svg></div><div class="wb x" style="left:527px"><svg width="40" height="22" viewBox="0 0 40 22" style="left:0;top:0"><path d="M11.500 5L13.500 3.500H16L19.500 7.500L23 3.500H25.500L27.500 5V6.500L23 10.700L27.500 15V16.500L25.500 18H23L19.500 14L16 18H13.500L11.500 16.500V15L16 10.700L11.500 6.500Z" fill="#dedede" stroke="#454a5c" stroke-width="1.300" stroke-linejoin="round"/></svg></div><div class="client" style="left:8px;top:37px;width:563px;height:165px;overflow:hidden"><svg width="563" height="165" viewBox="1292 143 563 165" style="left:0;top:0" font-family="'Liberation Sans', sans-serif" shape-rendering="crispEdges"><path d="M1300.500 190V177.500H1376" stroke="#000" stroke-width="1" fill="none"/><path d="M1376 177.500a3.900 4.500 0 0 1 7.800 0a3.900 4.500 0 0 1 7.800 0a3.900 4.500 0 0 1 7.800 0a3.900 4.500 0 0 1 7.800 0H1438.500V190" stroke="#000" stroke-width="1" fill="none"/><rect x="1296.500" y="190.500" width="8" height="20" stroke="#000" stroke-width="1" fill="none"/><path d="M1300.500 210.500V222.500M1296 222.500H1305" stroke="#000" stroke-width="1" fill="none"/><text transform="translate(1311.500 194) rotate(90)" font-size="11.500" fill="#000">Z<tspan font-size="7.500" dy="2.500" dx="-0.500">L</tspan></text><circle cx="1351.500" cy="177.500" r="1.600" fill="#000"/><path d="M1351.500 177.500V197.500M1344 197.500H1359M1344 201.500H1359M1351.500 201.500V221.500M1347 221.500H1356" stroke="#000" stroke-width="1" fill="none"/><circle cx="1438.500" cy="200.300" r="10.200" stroke="#000" stroke-width="1" fill="none"/><path d="M1432.500 198.500q2.500 -4 5.500 -0.500t6 -0.500M1432.500 203q2.500 -4 5.500 -0.500t6 -0.500" stroke="#000" stroke-width="1" fill="none"/><path d="M1438.500 210.500V222.500M1431 222.500H1445" stroke="#000" stroke-width="1" fill="none"/><path d="M1418 179.500L1414.500 182.500L1418 185.500M1414.500 182.500H1422.500V203" stroke="#000" stroke-width="1" fill="none"/><text transform="translate(1418.200 207.300) rotate(90)" font-size="10.500" fill="#000" stroke="#000" stroke-width="0.250">Zin</text><text transform="translate(1298 237) rotate(90)" font-size="16" fill="#000">(<tspan dx="3">500.00-j500.00)</tspan></text><text transform="translate(1349 237) rotate(90)" font-size="16" fill="#000">76.2pF</text><text transform="translate(1388.500 237) rotate(90)" font-size="16" fill="#000">5.0uH</text></svg></div></div>
<div class="win" style="left:1283px;top:214px;width:581px;height:212px"><div class="cap"></div><span class="ttl" style="left:12px">Datapoints</span><div class="wb" style="left:439px"><svg width="40" height="22" viewBox="0 0 40 22" style="left:0;top:0"><rect x="11.500" y="9.500" width="16" height="5" rx="1.200" fill="#f6f6f6" stroke="#454a5c" stroke-width="1.300"/></svg></div><div class="wb" style="left:483px"><svg width="40" height="22" viewBox="0 0 40 22" style="left:0;top:0"><rect x="11.700" y="3.700" width="16" height="14" rx="1.200" fill="#f2f2f2" stroke="#454a5c" stroke-width="1.300"/><rect x="15.700" y="7.700" width="8" height="6" fill="#c3d0e2" stroke="#454a5c" stroke-width="1.300"/></svg></div><div class="wb x" style="left:527px"><svg width="40" height="22" viewBox="0 0 40 22" style="left:0;top:0"><path d="M11.500 5L13.500 3.500H16L19.500 7.500L23 3.500H25.500L27.500 5V6.500L23 10.700L27.500 15V16.500L25.500 18H23L19.500 14L16 18H13.500L11.500 16.500V15L16 10.700L11.500 6.500Z" fill="#dedede" stroke="#454a5c" stroke-width="1.300" stroke-linejoin="round"/></svg></div><div class="lv" style="left:8px;top:37px;width:563px;height:165px"><div class="hdr"><span style="left:6.5px">Start DP</span><i style="left:66px"></i><span style="left:72.5px">Point</span><i style="left:111px"></i><span style="left:117.3px">Z</span><i style="left:264px"></i><span style="left:270.5px">Q</span><i style="left:327px"></i><span style="left:333.5px">Frequency</span></div><div class="row sel" style="top:21px"><span style="left:69.6px">DP 1</span><span style="left:114.6px">(500.000 - j500.000) Ω</span><span style="left:267.4px">Q=1.000</span><span style="left:330.2px">7.000MHz</span><i style="left:66px"></i><i style="left:111px"></i><i style="left:264px"></i><i style="left:327px"></i><svg width="10" height="10" viewBox="0 0 10 10" style="left:27px;top:5px"><rect x="0.500" y="0.500" width="9" height="9" fill="#fff" stroke="#8a8a8a"/><path d="M2 4.500L4 7L8 2" stroke="#000" stroke-width="1.600" fill="none"/></svg></div><div class="row" style="top:43px"><span style="left:69.6px">TP 2</span><span style="left:114.6px">(50.171 - j218.297) Ω</span><span style="left:267.4px">Q=4.351</span><span style="left:330.2px">7.000MHz</span><i style="left:66px"></i><i style="left:111px"></i><i style="left:264px"></i><i style="left:327px"></i></div><div class="row" style="top:65px"><span style="left:69.6px">TP 3</span><span style="left:114.6px">(50.171 + j0.478) Ω</span><span style="left:267.4px">Q=0.010</span><span style="left:330.2px">7.000MHz</span><i style="left:66px"></i><i style="left:111px"></i><i style="left:264px"></i><i style="left:327px"></i></div></div></div>
<div class="win" style="left:1283px;top:426px;width:581px;height:212px"><div class="cap"></div><span class="ttl" style="left:12px">Circles</span><div class="wb" style="left:439px"><svg width="40" height="22" viewBox="0 0 40 22" style="left:0;top:0"><rect x="11.500" y="9.500" width="16" height="5" rx="1.200" fill="#f6f6f6" stroke="#454a5c" stroke-width="1.300"/></svg></div><div class="wb" style="left:483px"><svg width="40" height="22" viewBox="0 0 40 22" style="left:0;top:0"><rect x="11.700" y="3.700" width="16" height="14" rx="1.200" fill="#f2f2f2" stroke="#454a5c" stroke-width="1.300"/><rect x="15.700" y="7.700" width="8" height="6" fill="#c3d0e2" stroke="#454a5c" stroke-width="1.300"/></svg></div><div class="wb x" style="left:527px"><svg width="40" height="22" viewBox="0 0 40 22" style="left:0;top:0"><path d="M11.500 5L13.500 3.500H16L19.500 7.500L23 3.500H25.500L27.500 5V6.500L23 10.700L27.500 15V16.500L25.500 18H23L19.500 14L16 18H13.500L11.500 16.500V15L16 10.700L11.500 6.500Z" fill="#dedede" stroke="#454a5c" stroke-width="1.300" stroke-linejoin="round"/></svg></div><div class="lv" style="left:8px;top:37px;width:563px;height:165px"><div class="hdr"><span style="left:6.5px">Visible</span><i style="left:54px"></i><span style="left:60.5px">Highlighted</span><i style="left:137px"></i><span style="left:143.5px">Details</span></div></div></div>
<div class="win" style="left:1319px;top:638px;width:545px;height:200px"><div class="cap"></div><span class="ttl" style="left:12px">Cursor</span><div class="cur" style="left:8px;top:37px;width:527px;height:153px;background:#f0f0f0"><label style="right:439.4px;top:19.6px">Return Loss</label><label style="right:444.4px;top:51.6px">Q</label><label style="right:444.8px;top:87.6px">Y</label><label style="right:437.7px;top:121.6px">Zo</label><label style="right:198.0px;top:19.6px">VSWR</label><label style="right:192.5px;top:54.6px;font-family:'Liberation Serif',serif;font-size:16.5px">Γ</label><label style="right:196.4px;top:87.6px">Z</label><label style="right:194.0px;top:121.6px">Freq</label><div class="fld" style="left:96px;top:16px">0.31 dB</div><div class="fld" style="left:96px;top:50px">27.12</div><div class="fld" style="left:96px;top:84px">(0.57+j15.54)mS</div><div class="fld" style="left:96px;top:119px">50.0Ω</div><div class="fld" style="left:344px;top:16px">55.99 :1</div><div class="fld" style="left:344px;top:49px">0.965 / -75.730 °</div><div class="fld" style="left:344px;top:84px">(2.37-j64.25)Ω</div><div class="fld" style="left:344px;top:119px">7.000MHz</div></div></div>
</div>
<div id="statusbar"></div>
</div>
</body>
</html>
